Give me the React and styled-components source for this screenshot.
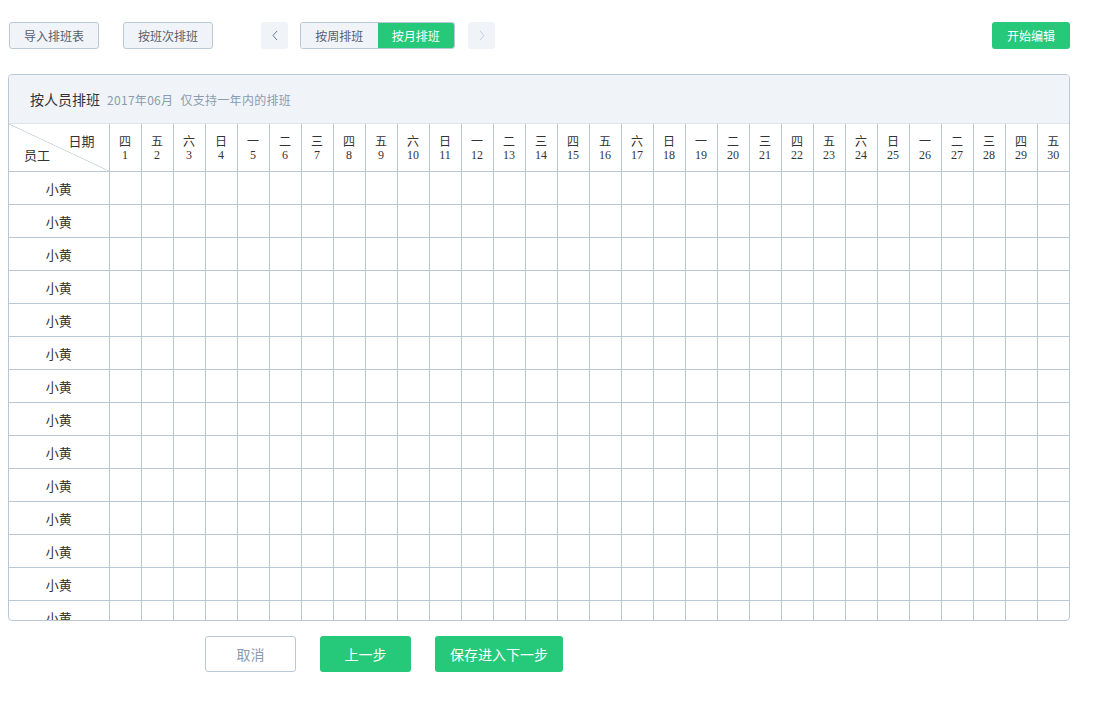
import React from "react";
import styled, { createGlobalStyle } from "styled-components";

const WEEK = ["日", "一", "二", "三", "四", "五", "六"];
// 2017-06-01 is a Thursday
const days = Array.from({ length: 30 }, (_, i) => ({ d: i + 1, w: WEEK[(4 + i) % 7] }));
const staff = Array.from({ length: 14 }, () => "小黄");

function App() {
	return (
		<Page>
			<GlobalStyle />
			<Toolbar>
				<GhostButton>导入排班表</GhostButton>
				<GhostButton>按班次排班</GhostButton>
				<NavGroup>
					<ArrowButton>
						<Chevron dir="left" />
					</ArrowButton>
					<Segmented>
						<Segment>按周排班</Segment>
						<Segment $active>按月排班</Segment>
					</Segmented>
					<ArrowButton $disabled>
						<Chevron dir="right" muted />
					</ArrowButton>
				</NavGroup>
				<EditButton>开始编辑</EditButton>
			</Toolbar>

			<Card>
				<CardHeader>
					<CardTitle>按人员排班</CardTitle>
					<CardSub>2017年06月</CardSub>
					<CardSub>仅支持一年内的排班</CardSub>
				</CardHeader>
				<TableWrap>
					<Table>
						<colgroup>
							<col style={{ width: 100 }} />
							{days.map((x) => (
								<col key={x.d} style={{ width: 32 }} />
							))}
						</colgroup>
						<thead>
							<tr>
								<CornerCell>
									<CornerTop>日期</CornerTop>
									<CornerBottom>员工</CornerBottom>
								</CornerCell>
								{days.map((x) => (
									<DayCell key={x.d}>
										<span>{x.w}</span>
										<DayNum>{x.d}</DayNum>
									</DayCell>
								))}
							</tr>
						</thead>
						<tbody>
							{staff.map((name, r) => (
								<tr key={r}>
									<NameCell>{name}</NameCell>
									{days.map((x) => (
										<Cell key={x.d} />
									))}
								</tr>
							))}
						</tbody>
					</Table>
				</TableWrap>
			</Card>

			<Footer>
				<CancelButton>取消</CancelButton>
				<PrimaryButton>上一步</PrimaryButton>
				<PrimaryButton $wide>保存进入下一步</PrimaryButton>
			</Footer>
		</Page>
	);
}

function Chevron({ dir, muted }) {
	const d = dir === "left" ? "M6 1 L2 5.5 L6 10" : "M2 1 L6 5.5 L2 10";
	return (
		<svg width="8" height="11" viewBox="0 0 8 11">
			<path d={d} fill="none" stroke={muted ? "#c4ced8" : "#6b7785"} strokeWidth="1" />
		</svg>
	);
}

const GlobalStyle = createGlobalStyle`
	body {
		margin: 0;
		background: #fff;
		font-family: "Noto Sans CJK SC", "Liberation Sans", sans-serif;
		color: #333;
	}
`;

const Page = styled.div`
	width: 1062px;
	padding: 22px 0 40px 8px;
`;

const Toolbar = styled.div`
	display: flex;
	align-items: center;
	gap: 24px;
	padding-left: 1px;
	height: 27px;
`;

const GhostButton = styled.button`
	box-sizing: border-box;
	width: 90px;
	height: 27px;
	border: 1px solid #b9c8d4;
	border-radius: 3px;
	background: #f0f4f9;
	color: #56606c;
	font-family: inherit;
	font-size: 12px;
	padding: 0;
`;

const NavGroup = styled.div`
	display: flex;
	align-items: center;
	gap: 12px;
	margin-left: 24px;
`;

const ArrowButton = styled.div`
	width: 27px;
	height: 27px;
	border-radius: 3px;
	background: #f0f4f9;
	display: flex;
	align-items: center;
	justify-content: center;
	margin-left: ${(p) => (p.$disabled ? "1px" : "0")};
`;

const Segmented = styled.div`
	display: flex;
	box-sizing: border-box;
	width: 155px;
	height: 27px;
	border: 1px solid #b9c8d4;
	border-radius: 3px;
	overflow: hidden;
`;

const Segment = styled.div`
	flex: 1;
	display: flex;
	align-items: center;
	justify-content: center;
	font-size: 12px;
	background: ${(p) => (p.$active ? "#26c97a" : "#f0f4f9")};
	color: ${(p) => (p.$active ? "#fff" : "#56606c")};
`;

const EditButton = styled.button`
	margin-left: auto;
	width: 78px;
	height: 27px;
	border: none;
	border-radius: 3px;
	background: #26c97a;
	color: #fff;
	font-family: inherit;
	font-size: 12px;
	padding: 0;
`;

const Card = styled.div`
	margin-top: 25px;
	border: 1px solid #b9c8d4;
	border-radius: 4px;
	overflow: hidden;
`;

const CardHeader = styled.div`
	height: 48px;
	background: #f0f4f9;
	display: flex;
	align-items: center;
	gap: 7px;
	padding-left: 21px;
	border-bottom: 1px solid #dde5ec;
`;

const CardTitle = styled.span`
	font-size: 14px;
	color: #333;
`;

const CardSub = styled.span`
	font-size: 12px;
	color: #8a9bb0;
	letter-spacing: 0.3px;
`;

const TableWrap = styled.div`
	height: 496px;
	overflow: hidden;
`;

const Table = styled.table`
	border-collapse: collapse;
	table-layout: fixed;
	width: 1060px;
	font-size: 12px;
`;

const CornerCell = styled.th`
	position: relative;
	height: 47px;
	padding: 0;
	border-right: 1px solid #b9c8d4;
	border-bottom: 1px solid #b9c8d4;
	font-weight: normal;
	background: linear-gradient(
		to top right,
		transparent calc(50% - 0.7px),
		#c3d0da 50%,
		transparent calc(50% + 0.7px)
	);
`;

const CornerTop = styled.span`
	position: absolute;
	right: 14px;
	top: 7px;
	font-size: 13px;
	color: #333;
`;

const CornerBottom = styled.span`
	position: absolute;
	left: 15px;
	bottom: 7px;
	font-size: 13px;
	color: #333;
`;

const DayCell = styled.th`
	height: 47px;
	padding: 0;
	border-right: 1px solid #b9c8d4;
	border-bottom: 1px solid #b9c8d4;
	font-weight: normal;
	font-size: 12px;
	line-height: 14px;
	color: #333;
	text-align: center;
	vertical-align: middle;

	& span {
		display: block;
	}

	&:last-child {
		border-right: none;
	}
`;

const DayNum = styled.span`
	font-family: "Liberation Serif", serif;
	font-size: 12px;
`;

const NameCell = styled.td`
	height: 32px;
	padding: 0;
	border-right: 1px solid #b9c8d4;
	border-bottom: 1px solid #b9c8d4;
	text-align: center;
	font-size: 13px;
	color: #333;
`;

const Cell = styled.td`
	padding: 0;
	border-right: 1px solid #b9c8d4;
	border-bottom: 1px solid #b9c8d4;

	&:last-child {
		border-right: none;
	}
`;

const Footer = styled.div`
	display: flex;
	gap: 24px;
	margin-top: 15px;
	padding-left: 197px;
`;

const CancelButton = styled.button`
	box-sizing: border-box;
	width: 91px;
	height: 36px;
	border: 1px solid #b9c8d4;
	border-radius: 3px;
	background: #fff;
	color: #8a9bb0;
	font-family: inherit;
	font-size: 14px;
	padding: 0;
`;

const PrimaryButton = styled.button`
	width: ${(p) => (p.$wide ? "128px" : "91px")};
	height: 36px;
	border: none;
	border-radius: 3px;
	background: #26c97a;
	color: #fff;
	font-family: inherit;
	font-size: 14px;
	padding: 0;
`;

export default App;
